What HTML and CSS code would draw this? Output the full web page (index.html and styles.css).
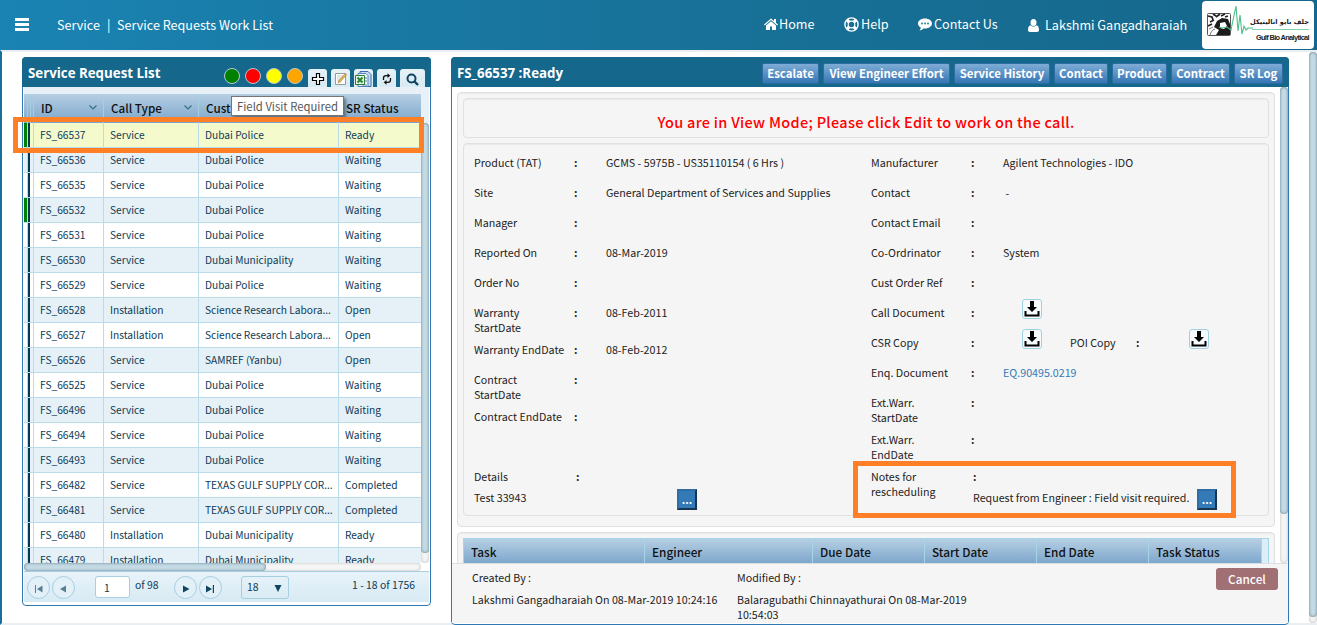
FILE: index.html
```html
<!DOCTYPE html>
<html lang="en">
<head>
    <meta charset="UTF-8">
    <meta name="viewport" content="width=device-width, initial-scale=1.0">
    <title>Service Requests Work List</title>
    <link rel="stylesheet" href="styles.css">
</head>
<body>
    <svg class="defs" width="0" height="0">
        <symbol id="download" viewBox="0 0 18 18">
            <path d="M7 1h4v6h3L9 12 4 7h3z"/>
            <path d="M1.500 11h2v3.500h11V11h2v5.500h-15z"/>
        </symbol>
        <symbol id="chevron" viewBox="0 0 8 5">
            <path d="M.5.5 4 4 7.500.5" fill="none" stroke="#35708c" stroke-width="1.200"/>
        </symbol>
    </svg>

    <header class="topbar">
        <div class="menu"><i></i><i></i><i></i></div>
        <div class="crumb">Service</div>
        <div class="crumb-page"><span>|</span>Service Requests Work List</div>
        <nav class="nav">
            <a class="nav-home">
                <svg width="14" height="12" viewBox="0 0 14 12" fill="#fff"><path d="M7 .5 0 6.500l.8.9L7 2.100l6.200 5.300.8-.9-2-1.700V1h-2v2z"/><path d="M7 3.300 2 7.500V12h4V8.500h2V12h4V7.500z"/></svg>
                <span>Home</span>
            </a>
            <a class="nav-help">
                <svg width="15" height="15" viewBox="0 0 15 15" fill="none" stroke="#fff"><circle cx="7.500" cy="7.500" r="6.600" stroke-width="1.400"/><circle cx="7.500" cy="7.500" r="3.300" stroke-width="1.200"/><path d="M2.900 2.900l2.300 2.300M12.100 2.900L9.800 5.200M2.900 12.100l2.300-2.300M12.100 12.100L9.800 9.800" stroke-width="3.200"/></svg>
                <span>Help</span>
            </a>
            <a class="nav-contact">
                <svg width="14" height="13" viewBox="0 0 14 13" fill="#fff"><path d="M7 .5c4 0 7 2.200 7 5s-3 5-7 5l-1.500-.1C4.300 11.600 3 12.200 1.500 12.400c.7-.7 1.200-1.500 1.400-2.700C1.100 8.700 0 7.200 0 5.500c0-2.800 3-5 7-5z"/><g fill="#187199"><circle cx="4" cy="5.500" r=".9"/><circle cx="7" cy="5.500" r=".9"/><circle cx="10" cy="5.500" r=".9"/></g></svg>
                <span>Contact Us</span>
            </a>
            <a class="nav-user">
                <svg width="11" height="13" viewBox="0 0 11 13" fill="#fff"><ellipse cx="5.500" cy="3.500" rx="3" ry="3.500"/><path d="M2.500 6.300C.8 6.500 0 8.500 0 11c0 1.300.8 2 2 2h7c1.200 0 2-.7 2-2 0-2.500-.8-4.500-2.500-4.700C7 8 4 8 2.500 6.300z"/></svg>
                <span>Lakshmi Gangadharaiah</span>
            </a>
        </nav>
        <div class="logo">
            <svg width="46" height="42" viewBox="0 0 46 42">
                <rect x=".5" y="14.500" width="23" height="22" rx="1" fill="#fff" stroke="#555"/>
                <path d="M10 22l5-3 6 1 2 5v11H9l3-5-5-3z" fill="#1c1c1c"/>
                <path d="M13 24l5-1 2 4-3 3-4-1z" fill="#fff"/>
                <path d="M1 17l4 1 1 3M6 15l3 2M9 18l4-3M14 17l4-2M3 23l4-2M1 27l4-2M18 18l3-1" fill="none" stroke="#222" stroke-width="1.700"/>
                <path d="M3 36c1-3 2-5 5-6M2 30l4-2" fill="none" stroke="#777"/>
                <path d="M12 28l3 1 5-1 4 3 2-10 3-14 2 25 2-16 2 19 2-8 2 4 2-2h6" fill="none" stroke="#4cc088" stroke-width="1.100"/>
            </svg>
            <div class="logo-text">
                <div class="logo-ar" lang="ar" dir="rtl">جلف بايو اناليتيكل</div>
                <div class="logo-en">Gulf Bio Analytical</div>
            </div>
        </div>
    </header>

    <main class="page">
        <section class="panel list-panel">
            <div class="panel-head">
                <h2>Service Request List</h2>
                <div class="dots">
                    <i class="dot green"></i><i class="dot red"></i><i class="dot yellow"></i><i class="dot orange"></i>
                </div>
                <div class="tools">
                    <button><svg width="14" height="14" viewBox="0 0 14 14"><path d="M5.500 1.500h3v4h4v3h-4v4h-3v-4h-4v-3h4z" fill="#fff" stroke="#000" stroke-width="1.200"/></svg></button>
                    <button><svg width="14" height="14" viewBox="0 0 14 14"><path d="M1.500 1.500h10v11h-10z" fill="#fff" stroke="#999"/><path d="M3 4h6M3 6h4M3 8h3" stroke="#ccc"/><path d="M4 11l.8-2.500 6.500-7 1.400 1.200-6.300 7z" fill="#e8b64c" stroke="#8a6a35" stroke-width=".5"/></svg></button>
                    <button><svg width="17" height="17" viewBox="0 0 17 17"><path d="M5 .5h8l3 3v12H5z" fill="#c7ddf6" stroke="#3e68ad"/><path d="M3 2.500h8l2 2v11H3z" fill="#edf5ff" stroke="#5b82bd"/><path d="M10 7h2M10 10h2M7 14h5" stroke="#5b82bd"/><path d="M.5 4.500h9v9h-9z" fill="#eaf5e5" stroke="#2e7a36"/><path d="M2.500 6.500l5 5M7.500 6.500l-5 5" stroke="#23862f" stroke-width="2"/></svg></button>
                    <button><svg width="12" height="12" viewBox="0 0 12 12" fill="none" stroke="#111" stroke-width="1.300"><path d="M2.500 7V5C2.500 3.500 3.500 2.700 5 2.700h2M9.500 5v2c0 1.500-1 2.300-2.500 2.300H5"/><path d="M6.500.3 9.300 2.700 6.500 5.100zM5.500 6.900 2.700 9.300 5.500 11.700z" fill="#111" stroke="none"/></svg></button>
                    <button class="wide"><svg width="13" height="13" viewBox="0 0 13 13" fill="none" stroke="#0e4560"><circle cx="5.500" cy="5.500" r="4" stroke-width="2"/><path d="M8.500 8.500l3.500 3.500" stroke-width="2.400"/></svg></button>
                </div>
            </div>

            <div class="grid-head">
                <div class="c-bar"></div><div class="c-bar2"></div><div class="c-bar3"></div>
                <div class="c-id">ID<svg width="8" height="5"><use href="#chevron"/></svg></div>
                <div class="c-type"><span>Call Type</span><svg width="8" height="5"><use href="#chevron"/></svg></div>
                <div class="c-cust">Cust</div>
                <div class="c-status">SR Status</div>
            </div>

            <div class="grid-body">
                <div class="rows">
                    <div class="row selected flag"><i></i><i></i><i></i><span>FS_66537</span><span>Service</span><span>Dubai Police</span><span>Ready</span></div>
                    <div class="row"><i></i><i></i><i></i><span>FS_66536</span><span>Service</span><span>Dubai Police</span><span>Waiting</span></div>
                    <div class="row"><i></i><i></i><i></i><span>FS_66535</span><span>Service</span><span>Dubai Police</span><span>Waiting</span></div>
                    <div class="row flag"><i></i><i></i><i></i><span>FS_66532</span><span>Service</span><span>Dubai Police</span><span>Waiting</span></div>
                    <div class="row"><i></i><i></i><i></i><span>FS_66531</span><span>Service</span><span>Dubai Police</span><span>Waiting</span></div>
                    <div class="row"><i></i><i></i><i></i><span>FS_66530</span><span>Service</span><span>Dubai Municipality</span><span>Waiting</span></div>
                    <div class="row"><i></i><i></i><i></i><span>FS_66529</span><span>Service</span><span>Dubai Police</span><span>Waiting</span></div>
                    <div class="row"><i></i><i></i><i></i><span>FS_66528</span><span>Installation</span><span>Science Research Labora...</span><span>Open</span></div>
                    <div class="row"><i></i><i></i><i></i><span>FS_66527</span><span>Installation</span><span>Science Research Labora...</span><span>Open</span></div>
                    <div class="row"><i></i><i></i><i></i><span>FS_66526</span><span>Service</span><span>SAMREF (Yanbu)</span><span>Open</span></div>
                    <div class="row"><i></i><i></i><i></i><span>FS_66525</span><span>Service</span><span>Dubai Police</span><span>Waiting</span></div>
                    <div class="row"><i></i><i></i><i></i><span>FS_66496</span><span>Service</span><span>Dubai Police</span><span>Waiting</span></div>
                    <div class="row"><i></i><i></i><i></i><span>FS_66494</span><span>Service</span><span>Dubai Police</span><span>Waiting</span></div>
                    <div class="row"><i></i><i></i><i></i><span>FS_66493</span><span>Service</span><span>Dubai Police</span><span>Waiting</span></div>
                    <div class="row"><i></i><i></i><i></i><span>FS_66482</span><span>Service</span><span>TEXAS GULF SUPPLY COR...</span><span>Completed</span></div>
                    <div class="row"><i></i><i></i><i></i><span>FS_66481</span><span>Service</span><span>TEXAS GULF SUPPLY COR...</span><span>Completed</span></div>
                    <div class="row"><i></i><i></i><i></i><span>FS_66480</span><span>Installation</span><span>Dubai Municipality</span><span>Ready</span></div>
                    <div class="row"><i></i><i></i><i></i><span>FS_66479</span><span>Installation</span><span>Dubai Municipality</span><span>Ready</span></div>
                </div>
                <div class="vscroll"><div class="thumb"></div></div>
            </div>
            <div class="hscroll"><div class="thumb"></div></div>

            <div class="pager">
                <button class="round off"><svg width="8" height="8" viewBox="0 0 8 8"><path d="M0 0h1v8H0zM7.500.5v7L2 4z"/></svg></button>
                <button class="round off"><svg width="8" height="8" viewBox="0 0 8 8"><path d="M7 .5v7L1 4z"/></svg></button>
                <div class="page-no">1</div>
                <div class="page-of">of 98</div>
                <button class="round"><svg width="8" height="8" viewBox="0 0 8 8"><path d="M1 .5v7L7.500 4z"/></svg></button>
                <button class="round"><svg width="8" height="8" viewBox="0 0 8 8"><path d="M0 .5v7L6 4zM6.800 0h1.200v8H6.800z"/></svg></button>
                <div class="page-size">18<svg width="8" height="7" viewBox="0 0 8 7"><path d="M.5 0h7L4 7z"/></svg></div>
                <div class="page-info">1 - 18 of 1756</div>
            </div>
            <div class="tooltip">Field Visit Required</div>
        </section>

        <section class="panel detail-panel">
            <div class="panel-head">
                <h2>FS_66537 :Ready</h2>
                <div class="actions">
                    <button class="a1">Escalate</button>
                    <button class="a2">View Engineer Effort</button>
                    <button class="a3">Service History</button>
                    <button class="a4">Contact</button>
                    <button class="a5">Product</button>
                    <button class="a6">Contract</button>
                    <button class="a7">SR Log</button>
                </div>
            </div>

            <div class="detail-scroll">
                <div class="detail-body">
                    <div class="well">
                        <div class="box notice">You are in View Mode; Please click Edit to work on the call.</div>
                        <div class="box info">
                            <div class="fields">
                                <div class="col">
                                    <div class="field"><label>Product (TAT)</label><b>:</b><span>GCMS - 5975B - US35110154 ( 6 Hrs )</span></div>
                                    <div class="field"><label>Site</label><b>:</b><span>General Department of Services and Supplies</span></div>
                                    <div class="field"><label>Manager</label><b>:</b></div>
                                    <div class="field"><label>Reported On</label><b>:</b><span>08-Mar-2019</span></div>
                                    <div class="field"><label>Order No</label><b>:</b></div>
                                    <div class="field"><label>Warranty<br>StartDate</label><b>:</b><span>08-Feb-2011</span></div>
                                    <div class="field"><label>Warranty EndDate</label><b>:</b><span>08-Feb-2012</span></div>
                                    <div class="field"><label>Contract<br>StartDate</label><b>:</b></div>
                                    <div class="field"><label>Contract EndDate</label><b>:</b></div>
                                </div>
                                <div class="col">
                                    <div class="field"><label>Manufacturer</label><b>:</b><span>Agilent Technologies - IDO</span></div>
                                    <div class="field"><label>Contact</label><b>:</b><span>&nbsp;-</span></div>
                                    <div class="field"><label>Contact Email</label><b>:</b></div>
                                    <div class="field"><label>Co-Ordrinator</label><b>:</b><span>System</span></div>
                                    <div class="field"><label>Cust Order Ref</label><b>:</b></div>
                                    <div class="field"><label>Call Document</label><b>:</b><button class="dl"><svg width="18" height="18"><use href="#download"/></svg></button></div>
                                    <div class="field"><label>CSR Copy</label><b>:</b><button class="dl"><svg width="18" height="18"><use href="#download"/></svg></button><label class="poi">POI Copy</label><b>:</b><button class="dl last"><svg width="18" height="18"><use href="#download"/></svg></button></div>
                                    <div class="field"><label>Enq. Document</label><b>:</b><a>EQ.90495.0219</a></div>
                                    <div class="field"><label>Ext.Warr.<br>StartDate</label><b>:</b></div>
                                    <div class="field"><label>Ext.Warr.<br>EndDate</label><b>:</b></div>
                                </div>
                            </div>
                            <div class="fields notes">
                                <div class="col">
                                    <div class="note-label"><label>Details</label><b>:</b></div>
                                    <div class="note"><span>Test 33943</span><button class="more">...</button></div>
                                </div>
                                <div class="col">
                                    <div class="note-label"><label>Notes for<br>rescheduling</label><b>:</b></div>
                                    <div class="note right"><span>Request from Engineer : Field visit required.</span><button class="more">...</button></div>
                                </div>
                            </div>
                        </div>
                    </div>
                    <div class="well tasks">
                        <div class="task-head">
                            <div>Task</div><div>Engineer</div><div>Due Date</div><div>Start Date</div><div>End Date</div><div>Task Status</div>
                        </div>
                    </div>
                </div>
                <div class="vscroll"><div class="thumb"></div></div>
            </div>

            <div class="detail-foot">
                <div class="created"><p>Created By :</p><p>Lakshmi Gangadharaiah On 08-Mar-2019 10:24:16</p></div>
                <div class="modified"><p>Modified By :</p><p>Balaragubathi Chinnayathurai On 08-Mar-2019<br>10:54:03</p></div>
                <button class="cancel">Cancel</button>
            </div>
        </section>

        <div class="vscroll page-scroll"><div class="thumb"></div></div>
    </main>

    <div class="mark mark-row"></div>
    <div class="mark mark-notes"></div>
</body>
</html>
```
FILE: styles.css
```css
* {
    box-sizing: border-box;
}

body {
    margin: 0;
    width: 1317px;
    height: 625px;
    overflow: hidden;
    position: relative;
    background: #fff;
    color: #222;
    font: 10.7px/15px "Trebuchet MS", "Noto Sans CJK SC", "Open Sans", sans-serif;
}

button {
    font: inherit;
    padding: 0;
    border: 0;
}

h2, p {
    margin: 0;
}

.defs {
    position: absolute;
}

/* top bar */
.topbar {
    display: flex;
    align-items: center;
    height: 50px;
    padding-left: 15px;
    background: linear-gradient(to right, #1a83b3, #187299 50%, #15678b);
    color: #fff;
    font-size: 12.6px;
    line-height: 20px;
    white-space: nowrap;
}

.menu {
    display: grid;
    gap: 2px;
    width: 42px;
    margin-top: -2px;
}

.menu i {
    width: 14px;
    height: 3px;
    background: #fff;
}

.crumb {
    width: 50px;
}

.crumb-page span {
    display: inline-block;
    width: 10px;
}

.nav {
    display: flex;
    align-items: center;
    margin-left: auto;
    height: 50px;
}

.nav a {
    display: flex;
    align-items: center;
    margin-top: -2px;
}

.nav .nav-home { width: 80px; gap: 1px; }
.nav .nav-help { width: 74px; gap: 2px; }
.nav .nav-contact { width: 110px; gap: 2px; }
.nav .nav-user { width: 174px; gap: 6px; margin-top: 0; }

.logo {
    display: flex;
    width: 112px;
    height: 48px;
    margin-right: 3px;
    padding-left: 5px;
    background: #fff;
    border-radius: 4px;
    color: #222;
}

.logo svg {
    flex: none;
    margin-top: -2px;
}

.logo-text {
    width: 57px;
    padding-top: 15px;
    margin-left: -1px;
}

.logo-ar {
    height: 14px;
    border-bottom: 1px solid #7fd3a8;
    font: bold 6.6px/13px "DejaVu Sans", sans-serif;
    white-space: nowrap;
}

.logo-en {
    padding-top: 1px;
    font: bold 7.4px/14px "Liberation Sans Narrow", "Liberation Sans", sans-serif;
    letter-spacing: -0.65px;
    text-align: right;
}

/* page */
.page {
    display: flex;
    height: 575px;
    border-top: 2px solid #e9eef2;
    border-left: 2px solid #17709a;
    border-bottom: 2px solid #e9eef2;
    padding: 5px 0 0 20px;
}

.panel {
    position: relative;
    border: 1px solid #2f78b4;
    border-radius: 4px;
    background: #fff;
}

.panel-head {
    display: flex;
    height: 30px;
    margin: -1px -1px 0;
    padding: 0 6px;
    background: #15678b;
    border-radius: 4px 4px 0 0;
}

.panel-head h2 {
    font: bold 13.3px/32px "Trebuchet MS", "Open Sans", sans-serif;
    color: #fff;
    white-space: nowrap;
}

.list-panel {
    width: 409px;
    height: 549px;
    margin-right: 20px;
    padding: 0 1px;
}

.list-panel .panel-head {
    margin: -1px -2px 0;
}

.dots {
    display: flex;
    gap: 5px;
    margin-left: auto;
    padding-top: 11px;
}

.dot {
    width: 16px;
    height: 16px;
    border: 1px solid #b5c9d0;
    border-radius: 50%;
}

.green { background: #008000; }
.red { background: #f00; }
.yellow { background: #ff0; }
.orange { background: #ffa500; }

.tools {
    display: flex;
    gap: 4px;
    align-items: flex-end;
    margin-left: 5px;
}

.tools button {
    display: flex;
    align-items: center;
    justify-content: center;
    width: 19px;
    height: 18px;
    background: linear-gradient(#e6f2f8, #d8eaf3);
    border-radius: 3px 3px 0 0;
}

.tools svg {
    flex: none;
    margin-top: 2px;
}

.tools .wide {
    width: 25px;
}

/* request grid */
.grid-head {
    display: flex;
    height: 36px;
    padding: 7px 8px 0 0;
    background: #e8f1f7;
    color: #111;
    font-size: 11.7px;
    font-weight: 500;
    line-height: 27px;
}

.grid-head div {
    display: flex;
    align-items: center;
    justify-content: space-between;
    border-right: 1px solid #a5cfe3;
    padding: 0 6px 2px 7px;
    background: linear-gradient(#b6cfe3, #7ba5cb);
}

.grid-head .c-bar { width: 4px; padding: 0; }
.grid-head .c-bar2, .grid-head .c-bar3 { width: 3px; padding: 0; }
.grid-head .c-id { width: 70px; }
.grid-head .c-type { width: 95px; }
.grid-head .c-cust { width: 140px; }
.grid-head .c-status { width: 82px; border: 0; }

.grid-body {
    display: flex;
    height: 440px;
    overflow: hidden;
}

.rows {
    width: 397px;
}

.row {
    display: grid;
    grid-template-columns: 4px 3px 3px 70px 95px 140px 82px;
    height: 25px;
    border-bottom: 1px solid #b9dbea;
    color: #0e3a56;
    font-size: 10.2px;
    line-height: 24px;
    white-space: nowrap;
}

.row:nth-child(even) {
    background: #e5f0f7;
}

.row.selected {
    background: #f5facd;
}

.row i, .row span {
    border-right: 1px solid #b9dbea;
}

.row span {
    padding-left: 6px;
}

.row span:last-child {
    border: 0;
}

.row.flag i:first-child {
    background: #008000;
}

.row i:nth-child(2) {
    background: #053953;
    border-right: 0;
    margin-right: 1px;
}

.vscroll {
    width: 8px;
    border-radius: 4px;
    background: #f4f4f4;
    box-shadow: inset 0 0 3px #bbb;
}

.thumb {
    border-radius: 4px;
    background: #c4dbe6;
    box-shadow: inset 0 0 3px #5d7783;
}

.grid-body .thumb {
    height: 430px;
}

.hscroll {
    width: 397px;
    height: 8px;
    border-radius: 4px;
    background: #f6f6f6;
    box-shadow: inset 0 0 3px #bbb;
}

.hscroll .thumb {
    width: 242px;
    height: 8px;
}

.pager {
    display: flex;
    height: 31px;
    padding: 4px 14px 0 3px;
    background: linear-gradient(#e8f3f9, #d7eaf4);
    border-top: 1px solid #a6cfe2;
    color: #0e3a56;
    font-size: 10.4px;
}

.round {
    display: flex;
    align-items: center;
    justify-content: center;
    width: 23px;
    height: 23px;
    margin-right: 1.500px;
    border: 1px solid #a6cfe2;
    border-radius: 50%;
    background: #e3f0f7;
    fill: #0e4560;
}

.round svg {
    margin-top: 2px;
}

.round.off svg {
    opacity: 0.65;
}

.page-no {
    width: 35px;
    height: 22px;
    margin-left: 19px;
    padding-left: 8px;
    border: 1px solid #a6cfe2;
    border-radius: 3px;
    background: #fff;
    line-height: 21px;
}

.page-of {
    width: 44px;
    padding-left: 5px;
    line-height: 17px;
}

.page-size {
    display: flex;
    align-items: center;
    justify-content: space-between;
    width: 48px;
    height: 23px;
    margin-left: 18px;
    padding: 0 6px 2px 5px;
    border: 1px solid #a6cfe2;
    border-radius: 3px;
    fill: #0e4560;
}

.page-size svg {
    margin-top: 4px;
}

.page-info {
    margin-left: auto;
    line-height: 17px;
}

.tooltip {
    position: absolute;
    left: 208px;
    top: 38px;
    width: 113px;
    height: 20px;
    border: 1px solid #767676;
    background: #fff;
    box-shadow: 2px 2px 3px rgba(0, 0, 0, 0.4);
    color: #575757;
    font: 11.3px/18px "Noto Sans CJK SC", sans-serif;
    text-align: center;
    white-space: nowrap;
}

/* detail panel */
.detail-panel {
    width: 838px;
    height: 568px;
}

.actions {
    display: flex;
    gap: 4px;
    margin-left: auto;
    padding-top: 6px;
}

.actions button {
    height: 21px;
    border: 1px solid #2e6da4;
    border-radius: 2px;
    background: linear-gradient(#7facd6, #3676b4);
    color: #fff;
    font: bold 11.4px/19px "Trebuchet MS", "Noto Sans CJK SC", sans-serif;
    white-space: nowrap;
}

.a1 { width: 57px; }
.a2 { width: 127px; }
.a3 { width: 96px; }
.a4 { width: 54px; }
.a5 { width: 55px; }
.a6 { width: 59px; }
.a7 { width: 49px; }

.detail-scroll {
    display: flex;
    justify-content: space-between;
    height: 476px;
    overflow: hidden;
}

.detail-body {
    width: 823px;
    padding: 5px 0 0 5px;
}

.well {
    padding: 5px;
    border: 1px solid #e1e1e1;
    border-radius: 4px;
    background: #f5f5f5;
    box-shadow: inset 0 1px 1px rgba(0, 0, 0, 0.05);
    height: 435px;
}

.box {
    border: 1px solid #e1e1e1;
    border-radius: 4px;
    box-shadow: inset 0 1px 1px rgba(0, 0, 0, 0.05);
}

.notice {
    height: 40px;
    margin-bottom: 5px;
    color: #f00;
    font: 500 14.5px/45px "Trebuchet MS", "Noto Sans CJK SC", sans-serif;
    letter-spacing: 0.3px;
    text-align: center;
}

.info {
    height: 373px;
    padding: 11px 10px;
}

.fields {
    display: grid;
    grid-template-columns: 397px 1fr;
}

.fields:first-child {
    height: 314px;
}

.field {
    display: flex;
    min-height: 30px;
    padding-bottom: 7px;
}

.field label {
    width: 99px;
}

.field b {
    width: 33px;
    padding-left: 1px;
}

.field a {
    color: #337ab7;
}

.dl {
    width: 20px;
    height: 20px;
    margin: -6px 0 -9px 19px;
    border: 1px solid #9fd0e4;
    border-radius: 3px;
    background: #f5fafc;
}

.dl svg {
    display: block;
}

.field .poi {
    width: 65px;
    margin-left: 28px;
}

.dl.last {
    margin-left: 21px;
}

.note-label {
    display: flex;
    height: 19px;
}

.note-label label {
    width: 102px;
}

.note {
    display: flex;
    width: 223px;
    justify-content: space-between;
    line-height: 20px;
}

.note.right {
    width: 346px;
    padding-left: 102px;
    white-space: nowrap;
}

.more {
    width: 20px;
    height: 21px;
    margin-top: 1px;
    border: 2px outset #2e6da4;
    background: #337ab7;
    color: #fff;
    font-weight: bold;
    line-height: 17px;
}

.tasks {
    margin-top: 5px;
    height: 60px;
}

.task-head {
    display: grid;
    grid-template-columns: 181px 168px 112px 112px 112px 113px 7px;
    height: 40px;
    border: 1px solid #a6d5e8;
    background: #dceef7;
    color: #111;
    font-size: 11.8px;
    font-weight: 500;
    line-height: 25px;
}

.task-head div {
    height: 25px;
    padding-left: 7px;
    border-right: 1px solid #a6d5e8;
    background: linear-gradient(#b6cfe3, #7ba5cb);
}

.detail-scroll .thumb {
    height: 427px;
}

.detail-foot {
    display: flex;
    height: 60px;
    padding: 4px 10px 0 20px;
    border-top: 1px solid #ddd;
    background: #f5f5f5;
}

.detail-foot p {
    padding-top: 2px;
    margin-bottom: 5px;
    white-space: nowrap;
}

.created {
    width: 265px;
}

.cancel {
    width: 62px;
    height: 22px;
    margin-left: auto;
    border-radius: 3px;
    background: #a17074;
    color: #fff;
    font-size: 11.8px;
    font-weight: 500;
    line-height: 20px;
}

.page-scroll {
    height: 571px;
    margin: -5px 0 0 auto;
}

.page-scroll .thumb {
    height: 565px;
}

/* highlights over the selected request and its notes */
.mark {
    position: absolute;
    border: 5px solid #ff7f27;
}

.mark-row {
    left: 13px;
    top: 117px;
    width: 411px;
    height: 36px;
}

.mark-notes {
    left: 853px;
    top: 461px;
    width: 383px;
    height: 57px;
}
```
